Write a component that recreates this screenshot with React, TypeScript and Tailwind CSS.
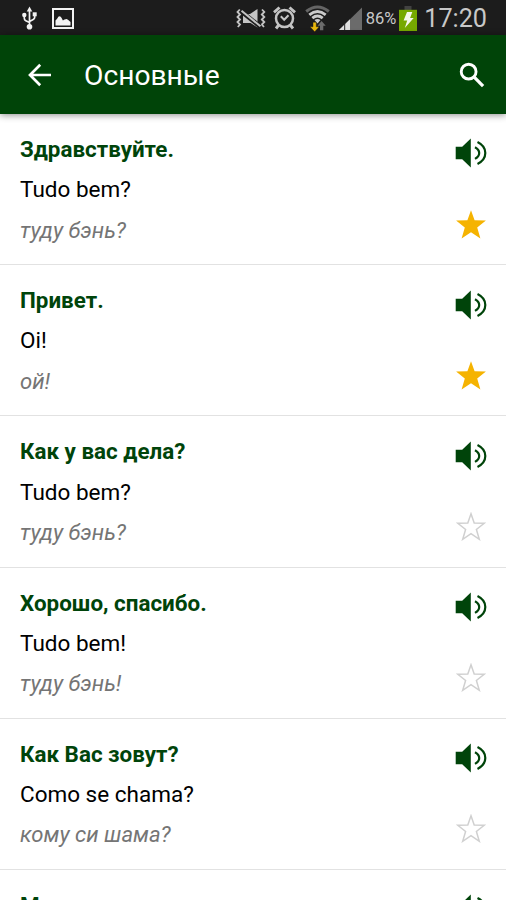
const STAR = 'M15 0.2 L18.6 10.2 L29.9 10.6 L21.2 17.6 L24.4 28.6 L15 22.3 L5.6 28.6 L8.8 17.6 L0.1 10.6 L11.4 10.2 Z';

interface Phrase {
  title: string;
  text: string;
  reading: string;
  starred?: boolean;
}

const phrases: Phrase[] = [
  { title: 'Здравствуйте.', text: 'Tudo bem?', reading: 'туду бэнь?', starred: true },
  { title: 'Привет.', text: 'Oi!', reading: 'ой!', starred: true },
  { title: 'Как у вас дела?', text: 'Tudo bem?', reading: 'туду бэнь?' },
  { title: 'Хорошо, спасибо.', text: 'Tudo bem!', reading: 'туду бэнь!' },
  { title: 'Как Вас зовут?', text: 'Como se chama?', reading: 'кому си шама?' },
  { title: 'Меня зовут', text: '', reading: '' },
];

function UsbIcon() {
  return (
    <svg className="ml-[22px] h-[24px] w-[15px] shrink-0" viewBox="0 0 15 24" fill="none" stroke="#f2f2f2" strokeWidth="1.7">
      <path d="M7.5 4v16M2.3 9v3.3q0 1.7 1.5 2.4l3.7 1.7M12.7 9v2.3q0 1.5-1.5 2.2l-3.7 1.9" />
      <path d="M7.5 0.6 10.3 5.4H4.7z" fill="#f2f2f2" stroke="none" />
      <circle cx="2.3" cy="9" r="2.2" fill="#f2f2f2" stroke="none" />
      <path d="M10.7 6.3h4v4h-4z" fill="#f2f2f2" stroke="none" />
      <circle cx="7.5" cy="20.7" r="2.8" fill="#f2f2f2" stroke="none" />
    </svg>
  );
}

function PictureIcon() {
  return (
    <svg className="mt-px ml-[15px] h-[21px] w-[22px] shrink-0" viewBox="0 0 22 21">
      <path d="M1 1h20v19H1z" fill="none" stroke="#f2f2f2" strokeWidth="2" />
      <path d="M3.5 17.5v-5l1.8-2q.8-2.3 2.3-2.3 1.2 0 2 1.7l1.3 2.5 1.6-1 2.2-.3 1.6.9L18.5 14v3.5z" fill="#f2f2f2" />
    </svg>
  );
}

function MutedVibrateIcon() {
  return (
    <svg className="mt-[3px] h-[22px] w-[30px] shrink-0" viewBox="0 0 30 22" fill="none" stroke="#c4c4c4" strokeWidth="1.8">
      <path d="M3.8 1.5 1.5 4 4 6.5 1.5 9 4 11.5 1.5 14 4 16.5 1.8 19" />
      <path d="M26 1.5 28.3 4 25.8 6.5 28.3 9 25.8 11.5 28.3 14 25.8 16.5 28 19" />
      <path d="M7 6h7L21.5 1v18.5l-7-4.5H7z" fill="#c4c4c4" stroke="none" />
      <path d="M6 4 24 18.5" stroke="#1c1c1c" strokeWidth="4.4" />
      <path d="M5.5 2.8 24.5 18.3" strokeWidth="2" />
    </svg>
  );
}

function AlarmIcon() {
  return (
    <svg className="mt-px ml-[7px] h-[24px] w-[23px] shrink-0" viewBox="0 0 23 24" fill="none" stroke="#c4c4c4" strokeWidth="2.5">
      <circle cx="11.5" cy="12.5" r="8.5" />
      <path d="M7.8 10.3 11.2 13.8 15.5 9.3" strokeWidth="2" />
      <path d="M1 6.3 6.5 1.5M22 6.3 16.5 1.5M5.7 19 3 22.5M17.3 19 20 22.5" strokeWidth="2.9" />
    </svg>
  );
}

function WifiIcon() {
  return (
    <svg className="mt-[2px] ml-[9px] h-[27px] w-[25px] shrink-0" viewBox="0 0 25 27" fill="none">
      <path d="M1.2 6.5Q12.5-2.5 23.8 6.5" stroke="#656565" strokeWidth="3" />
      <path d="M4.3 9.8Q12.5 3.2 20.7 9.8M7.3 13.1Q12.5 9 17.7 13.1" stroke="#cbcbcb" strokeWidth="2.9" />
      <path d="M9.5 15.1Q12.5 13 15.5 15.1L12.5 18.5z" fill="#cbcbcb" />
      <path d="M8 17.3h3.3v4.5h2.9L9.7 26.8 5 21.8h3z" fill="#e9b70c" stroke="#1c1c1c" strokeWidth=".4" />
      <path d="M15 25.2v-4.5h-2.5l4.1-4.8 4.1 4.8h-2.4v4.5z" fill="#6c6c6c" />
    </svg>
  );
}

function SignalIcon() {
  return (
    <svg className="mt-[3px] ml-[8px] h-[24px] w-[25px] shrink-0" viewBox="0 0 25 24">
      <path d="M1 23 24 .5V23z" fill="#6b6b6b" />
      <path d="M1 23 12 12.2V23z" fill="#e0e0e0" />
      <path d="M6.7 16v7" stroke="#222" />
    </svg>
  );
}

function BatteryIcon() {
  return (
    <svg className="mt-[2px] ml-[3px] h-[25px] w-[18px] shrink-0" viewBox="0 0 18 25">
      <path d="M5.5 0h7v4h-7z" fill="#424242" />
      <path d="M0 3.8h18V25H0z" fill="#76a900" />
      <path d="M8 6h5.3l-2.2 6.1h3.6L5.8 22l2.4-7.4H4.6z" fill="#f5f7ed" />
    </svg>
  );
}

function SpeakerIcon() {
  return (
    <svg className="h-[30px] w-[32px]" viewBox="0 0 32 30" fill="none" stroke="#00440a" strokeWidth="2.2">
      <path d="M.7 8.8h6.5L15.8.4v29.2l-8.6-8.4H.7z" fill="#00440a" stroke="none" />
      <path d="M20 9.2Q24.2 11.5 24.2 15T20 20.9M22.5 4.1Q30.3 8 30.3 15t-7.8 10.9" />
    </svg>
  );
}

function StarIcon({ filled }: { filled?: boolean }) {
  return filled ? (
    <svg className="h-[29px] w-[30px]" viewBox="0 0 30 29"><path d={STAR} fill="#f5b301" /></svg>
  ) : (
    <svg className="h-[29px] w-[30px]" viewBox="0 0 30 29">
      <path d="M15 1.8 18.2 10.9 28.2 11.3 20.4 17.5 23.3 27.3 15 21.7 6.7 27.3 9.6 17.5 1.8 11.3 11.8 10.9Z" fill="none" stroke="#d0d0d0" strokeWidth="1.5" />
    </svg>
  );
}

function PhraseRow({ phrase }: { phrase: Phrase }) {
  return (
    <li className="flex h-[151.2px] shrink-0 justify-between border-b-[1.6px] border-[#e2e2e2] pr-[19px] pl-[20px]">
      <div className="pt-[15.1px] leading-[40.2px] whitespace-nowrap">
        <p className="text-[22.4px] font-bold text-[#00440a]">{phrase.title}</p>
        <p className="text-[22.5px] text-black">{phrase.text}</p>
        <p className="text-[22.1px] text-[#757575] italic">{phrase.reading}</p>
      </div>
      <div className="flex flex-col items-center gap-[41.3px] pt-[24.4px]">
        <SpeakerIcon />
        <StarIcon filled={phrase.starred} />
      </div>
    </li>
  );
}

export default function App() {
  return (
    <div className="flex h-[900px] w-[506px] flex-col overflow-hidden bg-white font-[Roboto,sans-serif]">
      <div className="flex h-[35px] shrink-0 items-center bg-[#1c1c1c] text-[#c8c8c8]">
        <UsbIcon />
        <PictureIcon />
        <div className="ml-auto flex items-center pr-[19px]">
          <MutedVibrateIcon />
          <AlarmIcon />
          <WifiIcon />
          <SignalIcon />
          <span className="ml-[3px] pt-[3px] text-[16.5px]">86%</span>
          <BatteryIcon />
          <span className="ml-[7px] pt-[2px] text-[25.2px]">17:20</span>
        </div>
      </div>
      <header className="z-10 flex h-[79px] shrink-0 items-center bg-[#004408] pr-[21px] pl-[27px] text-white shadow-[0_1px_7px_rgba(0,0,0,0.45)]">
        <svg className="h-[24px] w-[24px]" viewBox="0 0 24 24" fill="none" stroke="white" strokeWidth="2.7">
          <path d="M24 12H3M13.2 1.8 3 12l10.2 10.2" />
        </svg>
        <h1 className="ml-[33px] pt-[3px] text-[28.2px]">Основные</h1>
        <svg className="ml-auto h-[26px] w-[26px]" viewBox="0 0 27 27" fill="none" stroke="white" strokeWidth="3">
          <circle cx="10" cy="10" r="7.7" />
          <path d="M15.8 15.8 25 25" strokeWidth="3.4" />
        </svg>
      </header>
      <ul className="flex flex-col">
        {phrases.map((p) => <PhraseRow key={p.title} phrase={p} />)}
      </ul>
    </div>
  );
}
